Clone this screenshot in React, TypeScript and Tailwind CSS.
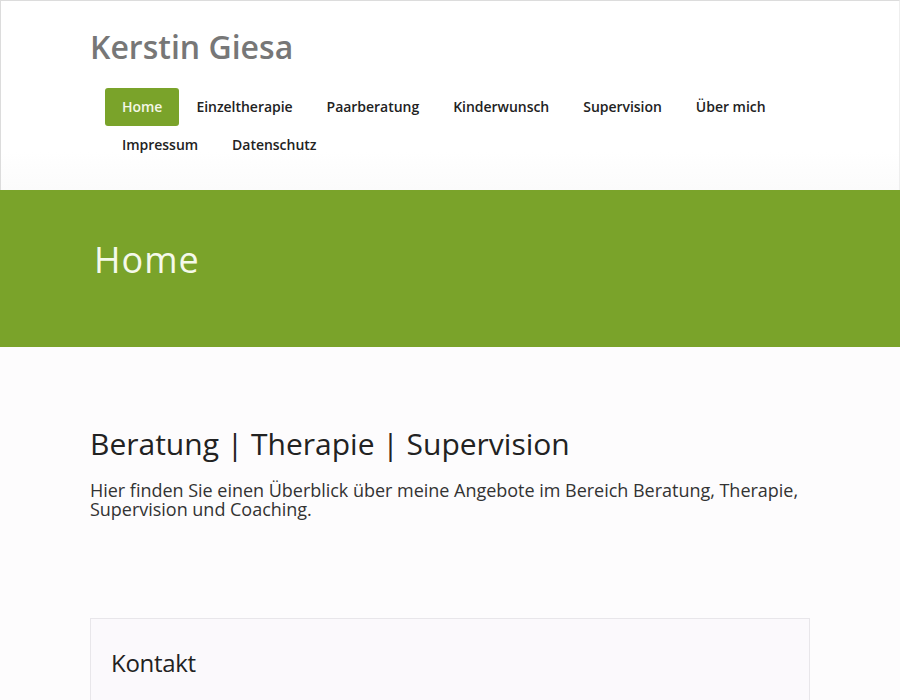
import React from "react";

const items = ["Home", "Einzeltherapie", "Paarberatung", "Kinderwunsch", "Supervision", "Über mich", "Impressum", "Datenschutz"];

export default function App() {
  return (
    <div className="min-h-[700px] bg-[#fdfcfd]" style={{ fontFamily: '"Open Sans", sans-serif' }}>
      <header className="h-[190px] border border-b-0 border-[#dcdcdc] border-r-[#eeeeee] bg-gradient-to-b from-white from-80% to-[#fbfbfb]">
        <div className="mx-auto w-[720px] pt-[26px]">
          <div className="text-[32px] font-semibold leading-[40px] text-[#777777]">Kerstin Giesa</div>
          <nav className="ml-[15px] mt-[21px] flex flex-wrap">
            {items.map((it, i) => (
              <a
                key={it}
                className={
                  "block h-[38px] px-[17px] text-[14px] font-semibold leading-[38px] tracking-[-0.03px] " +
                  (i === 0 ? "rounded-[3px] bg-[#7aa32a] text-[#f3f7e6]" : "text-[#222222]")
                }
              >
                {it}
              </a>
            ))}
          </nav>
        </div>
      </header>
      <section className="h-[157px] bg-[#7aa32a]">
        <div className="mx-auto w-[720px] pl-[4px] pt-[46px]">
          <h1 className="text-[36px] font-normal leading-[48px] tracking-[1px] text-[#f5f9ea]">Home</h1>
        </div>
      </section>
      <main className="mx-auto w-[720px] pt-[77px]">
        <h2 className="text-[30px] leading-[40px] text-[#222222]">Beratung | Therapie | Supervision</h2>
        <p className="mt-[17px] text-[18px] leading-[19px] tracking-[-0.02px] text-[#333333]">
          Hier finden Sie einen Überblick über meine Angebote im Bereich Beratung, Therapie, Supervision und Coaching.
        </p>
        <div className="mt-[99px] h-[120px] border border-[#e8e6ea] bg-[#fbf9fc] px-[20px] pt-[28px]">
          <h3 className="text-[24px] leading-[32px] tracking-[-0.3px] text-[#222222]">Kontakt</h3>
        </div>
      </main>
    </div>
  );
}
